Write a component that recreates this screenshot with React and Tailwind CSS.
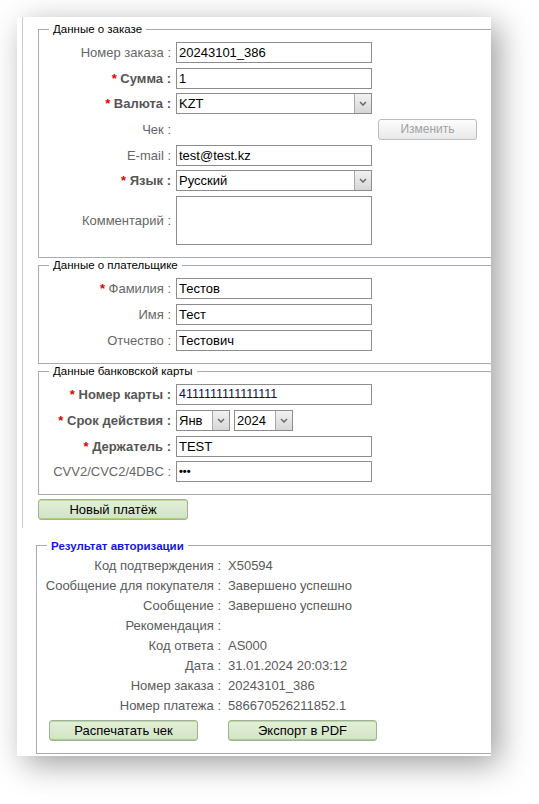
import React from 'react';

const font = { fontFamily: '"Liberation Sans", Arial, sans-serif' };

const Req = () => <span className="text-[#e00000] font-bold">*</span>;

const Label = ({ children, bold }) => (
  <div className={`w-[132px] shrink-0 text-right text-[13px] leading-[21px] ${bold ? 'font-bold text-[#555]' : 'text-[#666]'}`}>
    {children}
  </div>
);

const TextBox = ({ value, className = '' }) => (
  <div className={`ml-[5px] h-[21px] w-[196px] border border-[#8c8c8c] bg-white px-[2px] text-[13px] leading-[19px] text-black ${className}`}>
    {value}
  </div>
);

const Chevron = () => (
  <svg width="8" height="5" viewBox="0 0 8 5">
    <polyline points="1,1 4,4 7,1" fill="none" stroke="#6a6a6a" strokeWidth="1.5" />
  </svg>
);

const Select = ({ value, width = 'w-[196px]', className = 'ml-[5px]' }) => (
  <div className={`${className} ${width} flex h-[21px] items-stretch border border-[#8c8c8c] bg-white`}>
    <div className="flex-1 px-[2px] text-[13px] leading-[19px] text-black">{value}</div>
    <div className="flex w-[17px] items-center justify-center border-l border-[#a8a8a8] bg-gradient-to-b from-[#f2f2f2] to-[#d6d6d6]">
      <Chevron />
    </div>
  </div>
);

const Row = ({ children }) => <div className="flex items-center">{children}</div>;

const Legend = ({ children, className = 'text-black' }) => (
  <legend className={`ml-[10px] px-[4px] text-[11.5px] leading-[14px] ${className}`}>{children}</legend>
);

const GreenButton = ({ children, className = '' }) => (
  <button
    className={`h-[21px] w-[149px] rounded-[3px] border border-[#a3b197] bg-gradient-to-b from-[#e3efd9] to-[#d2e4c4] text-[13px] leading-[19px] text-black shadow-[inset_0_1px_0_#b9dc92,inset_0_-1px_0_#a9d27c] ${className}`}
  >
    {children}
  </button>
);

const ResultRow = ({ label, value }) => (
  <div className="flex h-[20px] items-center text-[13px] leading-[20px] text-[#5a5a5a]">
    <div className="w-[184px] shrink-0 text-right">{label} :</div>
    <div className="pl-[7px]">{value}</div>
  </div>
);

export default function App() {
  return (
    <div className="min-h-[804px] bg-white pt-[17px]" style={font}>
      <div className="ml-[17px] w-[474px] overflow-hidden bg-white pb-[2px] shadow-[8px_8px_30px_rgba(0,0,0,0.38)]">
        {/* Upper block */}
        <div className="ml-[5px] border-l border-[#cacaca] pb-[7px] pl-[15px] pt-[5px]">
          <fieldset className="w-[480px] border border-[#a9abb3] pb-[12px] pt-[6px]">
            <Legend>Данные о заказе</Legend>
            <div className="flex flex-col gap-[4.7px]">
              <Row>
                <Label>Номер заказа :</Label>
                <TextBox value="20243101_386" />
              </Row>
              <Row>
                <Label bold><Req /> Сумма :</Label>
                <TextBox value="1" />
              </Row>
              <Row>
                <Label bold><Req /> Валюта :</Label>
                <Select value="KZT" />
              </Row>
              <Row>
                <Label>Чек :</Label>
                <div className="ml-[5px] w-[196px]" />
                <button className="ml-[6px] h-[21px] w-[99px] rounded-[3px] border border-[#bdbdbd] bg-gradient-to-b from-[#fdfdfd] to-[#e9e9e9] text-[12px] leading-[19px] text-[#a2a2a2]">
                  Изменить
                </button>
              </Row>
              <Row>
                <Label>E-mail :</Label>
                <TextBox value="test@test.kz" />
              </Row>
              <Row>
                <Label bold><Req /> Язык :</Label>
                <Select value="Русский" />
              </Row>
              <Row>
                <Label>Комментарий :</Label>
                <div className="ml-[5px] h-[49px] w-[196px] border border-[#8c8c8c] bg-white" />
              </Row>
            </div>
          </fieldset>

          <fieldset className="w-[480px] border border-[#a9abb3] pb-[12px] pt-[6px]">
            <Legend>Данные о плательщике</Legend>
            <div className="flex flex-col gap-[5px]">
              <Row>
                <Label><Req /> Фамилия :</Label>
                <TextBox value="Тестов" />
              </Row>
              <Row>
                <Label>Имя :</Label>
                <TextBox value="Тест" />
              </Row>
              <Row>
                <Label>Отчество :</Label>
                <TextBox value="Тестович" />
              </Row>
            </div>
          </fieldset>

          <fieldset className="w-[480px] border border-[#a9abb3] pb-[12px] pt-[6px]">
            <Legend>Данные банковской карты</Legend>
            <div className="flex flex-col gap-[4.7px]">
              <Row>
                <Label bold><Req /> Номер карты :</Label>
                <TextBox value="4111111111111111" className="!text-[12.5px] !text-[#10104a]" />
              </Row>
              <Row>
                <Label bold><Req /> Срок действия :</Label>
                <Select value="Янв" width="w-[54px]" />
                <Select value="2024" width="w-[59px]" className="ml-[4px]" />
              </Row>
              <Row>
                <Label bold><Req /> Держатель :</Label>
                <TextBox value="TEST" />
              </Row>
              <Row>
                <Label>CVV2/CVC2/4DBC :</Label>
                <TextBox value="•••" className="!text-[11px] font-bold" />
              </Row>
            </div>
          </fieldset>

          <GreenButton className="mt-[4px] w-[150px]">Новый платёж</GreenButton>
        </div>

        {/* Authorization result */}
        <fieldset className="ml-[19px] mt-[10.5px] w-[480px] border border-[#a9abb3] pb-[12px] pt-[3px]">
          <Legend className="font-bold text-[#1414e6]">Результат авторизации</Legend>
          <ResultRow label="Код подтверждения" value="X50594" />
          <ResultRow label="Сообщение для покупателя" value="Завершено успешно" />
          <ResultRow label="Сообщение" value="Завершено успешно" />
          <ResultRow label="Рекомендация" value="" />
          <ResultRow label="Код ответа" value="AS000" />
          <ResultRow label="Дата" value="31.01.2024 20:03:12" />
          <ResultRow label="Номер заказа" value="20243101_386" />
          <ResultRow label="Номер платежа" value="586670526211852.1" />
          <div className="mt-[4px] flex gap-[30px] pl-[12px]">
            <GreenButton>Распечатать чек</GreenButton>
            <GreenButton>Экспорт в PDF</GreenButton>
          </div>
        </fieldset>
      </div>
    </div>
  );
}
